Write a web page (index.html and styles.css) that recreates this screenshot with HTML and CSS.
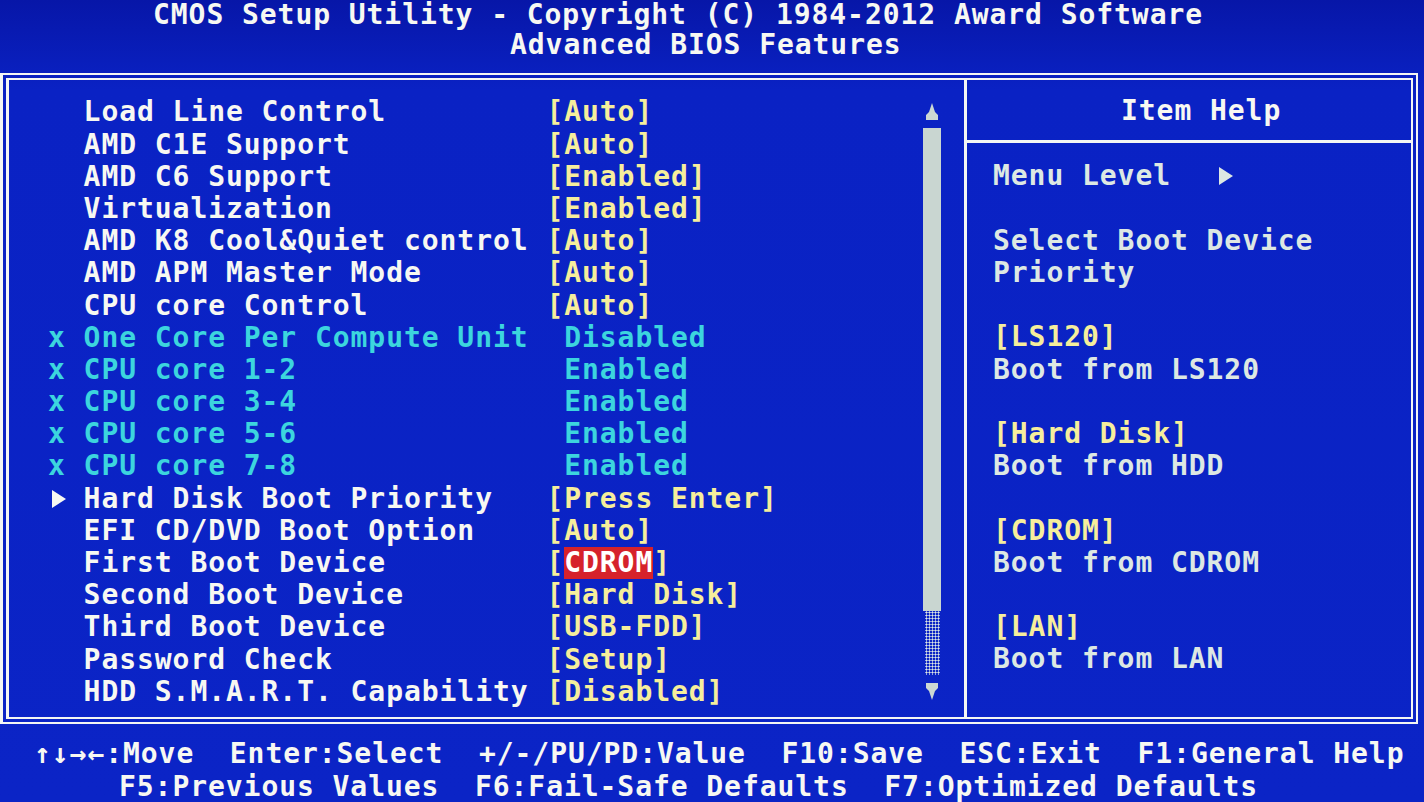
FILE: index.html
```html
<!DOCTYPE html>
<html lang="en">
<head>
  <meta charset="UTF-8">
  <title>CMOS Setup Utility</title>
  <link rel="stylesheet" href="styles.css">
</head>
<body>
  <div class="screen">
    <!-- Cabecera -->
    <header class="title">
      <div class="title-main">CMOS Setup Utility - Copyright (C) 1984-2012 Award Software</div>
      <div class="title-sub">Advanced BIOS Features</div>
    </header>

    <!-- Marco principal -->
    <main class="frame">
      <section class="menu">
        <ul class="items">
          <li class="item"><span class="mark"></span><span class="label">Load Line Control</span><span class="value">[Auto]</span></li>
          <li class="item"><span class="mark"></span><span class="label">AMD C1E Support</span><span class="value">[Auto]</span></li>
          <li class="item"><span class="mark"></span><span class="label">AMD C6 Support</span><span class="value">[Enabled]</span></li>
          <li class="item"><span class="mark"></span><span class="label">Virtualization</span><span class="value">[Enabled]</span></li>
          <li class="item"><span class="mark"></span><span class="label">AMD K8 Cool&amp;Quiet control</span><span class="value">[Auto]</span></li>
          <li class="item"><span class="mark"></span><span class="label">AMD APM Master Mode</span><span class="value">[Auto]</span></li>
          <li class="item"><span class="mark"></span><span class="label">CPU core Control</span><span class="value">[Auto]</span></li>
          <li class="item off"><span class="mark">x</span><span class="label">One Core Per Compute Unit</span><span class="value">Disabled</span></li>
          <li class="item off"><span class="mark">x</span><span class="label">CPU core 1-2</span><span class="value">Enabled</span></li>
          <li class="item off"><span class="mark">x</span><span class="label">CPU core 3-4</span><span class="value">Enabled</span></li>
          <li class="item off"><span class="mark">x</span><span class="label">CPU core 5-6</span><span class="value">Enabled</span></li>
          <li class="item off"><span class="mark">x</span><span class="label">CPU core 7-8</span><span class="value">Enabled</span></li>
          <li class="item"><span class="mark"><span class="arrow"></span></span><span class="label">Hard Disk Boot Priority</span><span class="value">[Press Enter]</span></li>
          <li class="item"><span class="mark"></span><span class="label">EFI CD/DVD Boot Option</span><span class="value">[Auto]</span></li>
          <li class="item"><span class="mark"></span><span class="label">First Boot Device</span><span class="value">[<span class="selected">CDROM</span>]</span></li>
          <li class="item"><span class="mark"></span><span class="label">Second Boot Device</span><span class="value">[Hard Disk]</span></li>
          <li class="item"><span class="mark"></span><span class="label">Third Boot Device</span><span class="value">[USB-FDD]</span></li>
          <li class="item"><span class="mark"></span><span class="label">Password Check</span><span class="value">[Setup]</span></li>
          <li class="item"><span class="mark"></span><span class="label">HDD S.M.A.R.T. Capability</span><span class="value">[Disabled]</span></li>
        </ul>

        <!-- Barra de desplazamiento -->
        <div class="scrollbar">
          <div class="scroll-btn">
            <svg width="14" height="17" viewBox="0 0 14 17"><path d="M7 0 L10 9 L13 12 L13 17 L1 17 L1 12 L4 9 Z" fill="#cbd8d3"/></svg>
          </div>
          <div class="scroll-thumb"></div>
          <div class="scroll-track"></div>
          <div class="scroll-btn">
            <svg width="14" height="17" viewBox="0 0 14 17"><path d="M1 0 L13 0 L13 5 L10 8 L7 17 L4 8 L1 5 Z" fill="#cbd8d3"/></svg>
          </div>
        </div>
      </section>

      <!-- Ayuda -->
      <aside class="help">
        <div class="help-head">Item Help</div>
        <div class="help-body">
          <p>Menu Level <span class="help-arrow"></span></p>
          <p>Select Boot Device<br>Priority</p>
          <p><span class="key">[LS120]</span><br>Boot from LS120</p>
          <p><span class="key">[Hard Disk]</span><br>Boot from HDD</p>
          <p><span class="key">[CDROM]</span><br>Boot from CDROM</p>
          <p><span class="key">[LAN]</span><br>Boot from LAN</p>
        </div>
      </aside>
    </main>

    <!-- Teclas -->
    <footer class="keys">
      <div class="keys-line first">
        <span>↑↓→←:Move</span>
        <span>Enter:Select</span>
        <span>+/-/PU/PD:Value</span>
        <span>F10:Save</span>
        <span>ESC:Exit</span>
        <span>F1:General Help</span>
      </div>
      <div class="keys-line second">
        <span>F5:Previous Values</span>
        <span>F6:Fail-Safe Defaults</span>
        <span>F7:Optimized Defaults</span>
      </div>
    </footer>
  </div>
</body>
</html>
```

FILE: styles.css
```css
:root {
  --cell: 17.8px;
  --row: 32.2px;
  --white: #f7f8f2;
  --yellow: #f6ee9c;
  --cyan: #3cd5de;
  --help: #dde8e3;
}
body {
  margin: 0;
  background: #0a22c4;
  font-family: "DejaVu Sans Mono", "Liberation Mono", monospace;
  font-weight: bold;
  font-size: 28px;
  letter-spacing: 0.94px;
  line-height: var(--row);
  color: var(--white);
  overflow: hidden;
}
.screen {
  width: 1424px;
  height: 802px;
  background: linear-gradient(#0716a8, #0a22c4 90px, #0b24c6);
}
/* Cabecera */
.title {
  height: calc(var(--row) * 2);
  line-height: 30px;
}
.title-main {
  padding-left: 153px;
  white-space: nowrap;
}
.title-sub {
  padding-left: 510px;
  white-space: nowrap;
}
/* Marco con borde doble */
.frame {
  box-sizing: border-box;
  width: 1418px;
  height: 651px;
  margin-top: 9px;
  border-style: double;
  border-color: #f4f6f4;
  border-width: 7px 7px 7px 9px;
  display: flex;
}
.menu {
  width: 955px;
  display: flex;
}
.items {
  flex: 1;
  list-style: none;
  margin: 0;
  padding: 16px 0 0 39px;
}
.item {
  display: flex;
  white-space: pre;
  height: var(--row);
}
.mark {
  width: calc(var(--cell) * 2);
  flex-shrink: 0;
  display: flex;
  align-items: center;
}
.label {
  width: calc(var(--cell) * 26);
  flex-shrink: 0;
}
.value {
  color: var(--yellow);
}
.off .mark,
.off .label,
.off .value {
  color: var(--cyan);
}
.off .value {
  padding-left: var(--cell);
}
.arrow {
  width: 0;
  height: 0;
  margin-left: 4px;
  border-top: 9px solid transparent;
  border-bottom: 9px solid transparent;
  border-left: 14px solid var(--white);
}
.selected {
  display: inline-block;
  background: #d6222b;
  color: #fff;
}
/* Barra de desplazamiento */
.scrollbar {
  width: 18px;
  margin-right: 23px;
  padding-top: 15px;
  display: flex;
  flex-direction: column;
  align-items: center;
}
.scroll-btn {
  height: var(--row);
  display: flex;
  align-items: center;
  justify-content: center;
}
.scroll-thumb {
  width: 18px;
  height: calc(var(--row) * 15);
  background: #c9d6d1;
}
.scroll-track {
  width: 15px;
  height: calc(var(--row) * 2);
  background: radial-gradient(circle, #dfe8e4 0.9px, transparent 1.2px) 0 0 / 3px 3px;
}
/* Panel de ayuda */
.help {
  flex: 1;
  border-left: 3px solid #f4f6f4;
  color: var(--help);
}
.help-head {
  box-sizing: border-box;
  height: 63px;
  padding: 15px 0 0 154px;
  border-bottom: 3px solid #f4f6f4;
  color: var(--white);
}
.help-body {
  padding: 17px 0 0 26px;
}
.help-body p {
  margin: 0 0 var(--row);
  white-space: pre;
}
.help-arrow {
  display: inline-block;
  width: 0;
  height: 0;
  margin-left: 30px;
  border-top: 9px solid transparent;
  border-bottom: 9px solid transparent;
  border-left: 14px solid var(--help);
}
.key {
  color: var(--yellow);
}
/* Teclas de ayuda */
.keys {
  margin-top: 14px;
}
.keys-line {
  display: flex;
  gap: calc(var(--cell) * 2);
  white-space: pre;
}
.keys-line.first {
  padding-left: 34px;
}
.keys-line.second {
  padding-left: 119px;
}
```
